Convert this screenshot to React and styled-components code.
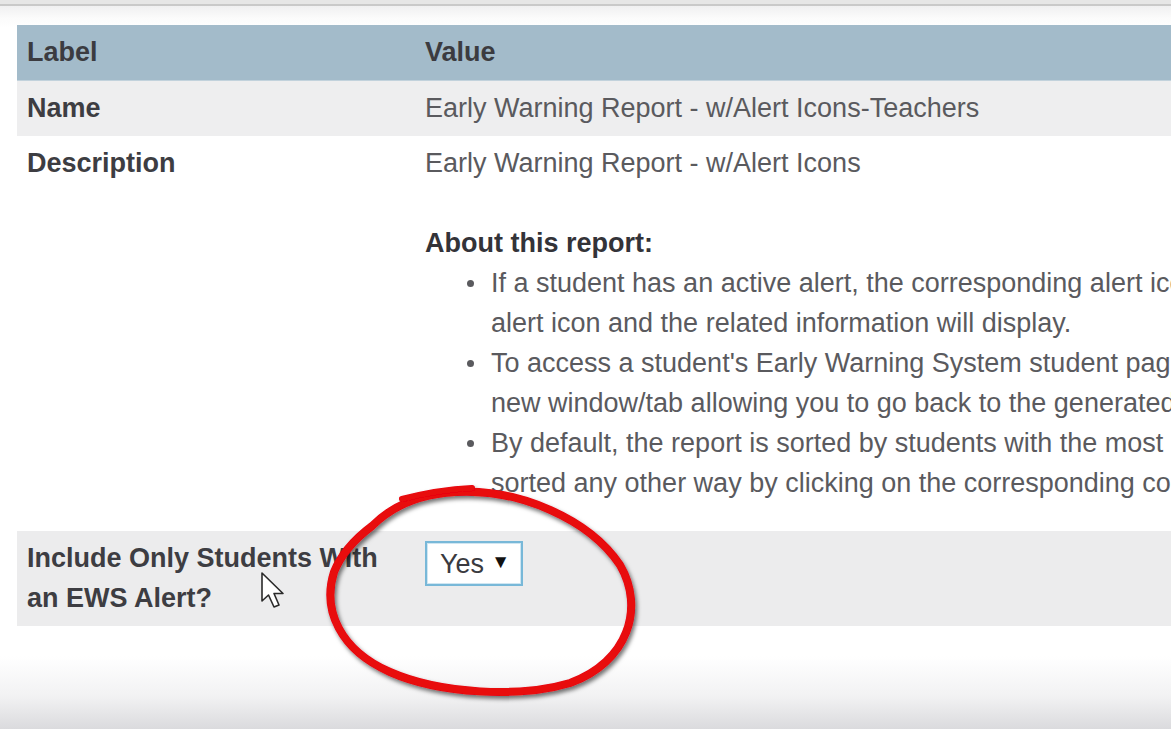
import React from "react";
import styled, { createGlobalStyle } from "styled-components";

const Global = createGlobalStyle`
  html, body { margin: 0; padding: 0; }
  body {
    width: 1171px;
    height: 729px;
    overflow: hidden;
    background: #e6e6e6;
    font-family: "Liberation Sans", Arial, sans-serif;
  }
`;

const Page = styled.div`
  position: relative;
  width: 1171px;
  height: 729px;
  overflow: hidden;
  box-sizing: border-box;
  padding-top: 4px;
`;

const Panel = styled.div`
  height: 725px;
  box-sizing: border-box;
  border-top: 2px solid #c9c9c9;
  padding: 19px 0 0 17px;
  background: linear-gradient(
    to bottom,
    #f0f0f1 0px,
    #fbfbfb 12px,
    #ffffff 22px,
    #ffffff 650px,
    #f2f2f3 690px,
    #d9d9dc 725px
  );
`;

const Table = styled.table`
  width: 1400px;
  border-collapse: collapse;
  table-layout: fixed;
  font-size: 27px;
  line-height: 40px;
`;

const Row = styled.tr`
  background: ${(p) => p.$bg || "#ffffff"};
`;

const HeadCell = styled.th`
  text-align: left;
  font-weight: bold;
  color: #3b3b40;
  padding: 7px 10px 8px;
  background: #a3bbca;
  border-bottom: 1px solid #c2d2dc;
  font-size: 27px;
`;

const LabelCell = styled.td`
  width: 378px;
  vertical-align: top;
  font-weight: bold;
  color: #3d3d42;
  padding: 7px 10px 8px;
`;

const ValueCell = styled.td`
  vertical-align: top;
  color: #5a5a5e;
  padding: 7px 10px 8px;
`;

const Heading = styled.div`
  font-weight: bold;
  color: #333338;
  margin-top: 40px;
`;

const List = styled.ul`
  margin: 0 0 20px;
  padding-left: 66px;
  list-style: none;
`;

const Item = styled.li`
  position: relative;
  &::before {
    content: "";
    position: absolute;
    left: -24px;
    top: 17px;
    width: 7px;
    height: 7px;
    border-radius: 50%;
    background: #5a5a5e;
  }
`;

const Line = styled.span`
  display: block;
  white-space: nowrap;
`;

const Select = styled.div`
  display: inline-flex;
  align-items: center;
  justify-content: space-between;
  box-sizing: border-box;
  width: 98px;
  height: 45px;
  padding: 0 11px 0 13px;
  margin-top: 3px;
  background: #ffffff;
  border: 2px solid #78b8d8;
  box-shadow: inset 0 0 0 1px #cfe6f2;
  color: #3a3a40;
  font-size: 27px;
`;

const Caret = styled.span`
  font-size: 19px;
  line-height: 1;
  color: #111;
  margin-top: -4px;
`;

const Overlay = styled.svg`
  position: absolute;
  left: 0;
  top: 0;
  pointer-events: none;
`;

export default function App() {
  return (
    <Page>
      <Global />
      <Panel>
        <Table>
          <colgroup>
            <col style={{ width: "398px" }} />
            <col />
          </colgroup>
          <thead>
            <tr>
              <HeadCell>Label</HeadCell>
              <HeadCell>Value</HeadCell>
            </tr>
          </thead>
          <tbody>
            <Row $bg="#eeeeef">
              <LabelCell>Name</LabelCell>
              <ValueCell>Early Warning Report - w/Alert Icons-Teachers</ValueCell>
            </Row>
            <Row>
              <LabelCell>Description</LabelCell>
              <ValueCell>
                Early Warning Report - w/Alert Icons
                <Heading>About this report:</Heading>
                <List>
                  <Item>
                    <Line>If a student has an active alert, the corresponding alert icon will display. Hover over the</Line>
                    <Line>alert icon and the related information will display.</Line>
                  </Item>
                  <Item>
                    <Line>To access a student's Early Warning System student page, click on the student's name. It will open in a</Line>
                    <Line>new window/tab allowing you to go back to the generated report.</Line>
                  </Item>
                  <Item>
                    <Line>By default, the report is sorted by students with the most alerts. The report can be</Line>
                    <Line>sorted any other way by clicking on the corresponding column header.</Line>
                  </Item>
                </List>
              </ValueCell>
            </Row>
            <Row $bg="#ececed">
              <LabelCell>Include Only  Students With an EWS Alert?</LabelCell>
              <ValueCell>
                <Select>
                  Yes <Caret>▼</Caret>
                </Select>
              </ValueCell>
            </Row>
          </tbody>
        </Table>
      </Panel>
      <Overlay width="1171" height="729" viewBox="0 0 1171 729">
        <defs>
          <filter id="sh" x="-20%" y="-20%" width="140%" height="140%">
            <feDropShadow dx="2" dy="3" stdDeviation="2" floodColor="#000" floodOpacity="0.55" />
          </filter>
        </defs>
        <g filter="url(#sh)" fill="none" stroke="#e8070d" strokeLinecap="round" strokeLinejoin="round">
          <path
            strokeWidth="8"
            d="M 372 526 C 392 506, 420 494, 455 492 C 520 488, 590 520, 620 565 C 645 608, 628 662, 570 683 C 520 698, 440 694, 390 672 C 340 650, 322 610, 334 572 C 342 552, 356 538, 372 526"
          />
          <path strokeWidth="6" d="M 402 499 C 425 493, 450 489, 472 488" />
        </g>
        <path
          d="M 262 573 L 262 601 L 268.5 595 L 274 607 L 279 605 L 274 593.5 L 283 593.5 Z"
          fill="#ffffff"
          stroke="#2a2a2a"
          strokeWidth="1.6"
          strokeLinejoin="round"
        />
      </Overlay>
    </Page>
  );
}
